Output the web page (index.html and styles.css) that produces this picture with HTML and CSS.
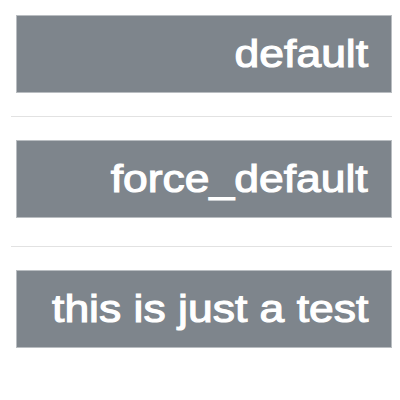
FILE: index.html
```html
<!DOCTYPE html>
<html>
<head>
<meta charset="utf-8">
<link rel="stylesheet" href="styles.css">
</head>
<body>
<div class="list">
  <div class="item first"><span class="label">default</span></div>
  <div class="sep sep-a"></div>
  <div class="item"><span class="label">force_default</span></div>
  <div class="sep sep-b"></div>
  <div class="item"><span class="label">this is just a test</span></div>
</div>
</body>
</html>
```
FILE: styles.css
```css
html, body {
  margin: 0;
  padding: 0;
  background: #ffffff;
}
.list {
  display: flex;
  flex-direction: column;
  padding-left: 11px;
  padding-top: 15px;
  width: 381px;
}
.item {
  box-sizing: border-box;
  margin-left: 5px;
  width: 376px;
  height: 78px;
  background: #7e858c;
  border: 1px solid #b9bdc1;
  display: flex;
  align-items: center;
  justify-content: flex-end;
  padding-right: 23px;
}
.label {
  display: inline-block;
  font-family: "Liberation Sans", Arial, sans-serif;
  font-weight: normal;
  font-size: 38px;
  line-height: 38px;
  color: #ffffff;
  white-space: nowrap;
  transform: scaleX(1.17);
  transform-origin: right center;
  -webkit-text-stroke: 1.1px #ffffff;
}
.sep {
  height: 1px;
  background: #e2e2e2;
  width: 381px;
}
.sep-a {
  margin-top: 23px;
  margin-bottom: 23px;
}
.sep-b {
  margin-top: 28px;
  margin-bottom: 23px;
}
```
